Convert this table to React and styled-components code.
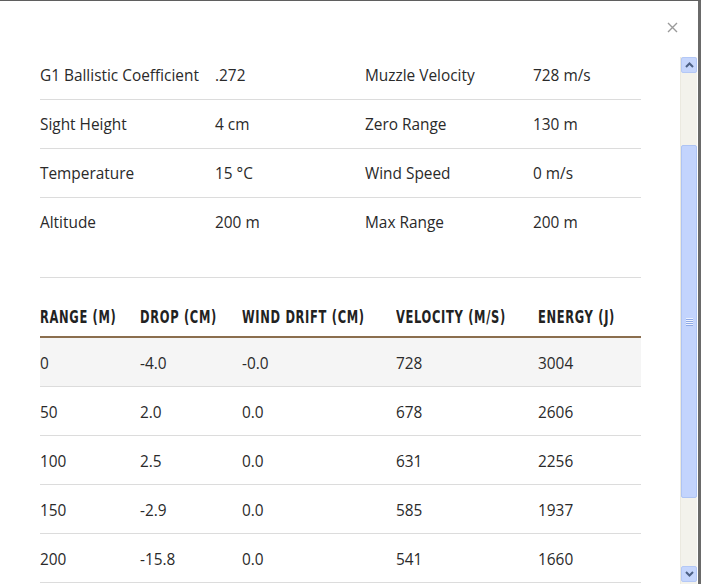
import React from "react";
import styled, { createGlobalStyle } from "styled-components";

const GlobalStyle = createGlobalStyle`
  html, body {
    margin: 0;
    padding: 0;
    background: #ffffff;
  }
  body {
    font-family: "Open Sans", "Lato", sans-serif;
  }
`;

/* 바깥 창 */
const Frame = styled.div`
  width: 701px;
  height: 584px;
  box-sizing: border-box;
  border-top: 1px solid #5f5f5f;
  border-right: 3px solid #6a6a6a;
  display: flex;
  flex-direction: column;
  background: #ffffff;
  overflow: hidden;
`;

/* 닫기 버튼 영역 */
const TopBar = styled.div`
  height: 56px;
  flex-shrink: 0;
  display: flex;
  justify-content: flex-end;
  align-items: center;
  padding-right: 18px;
`;

const CloseButton = styled.button`
  border: none;
  background: none;
  padding: 0;
  width: 16px;
  height: 16px;
  cursor: pointer;
  display: flex;
  align-items: center;
  justify-content: center;
  margin-top: -3px;
`;

const Body = styled.div`
  flex: 1;
  display: flex;
  min-height: 0;
`;

/* 스크롤 내용 */
const ScrollView = styled.div`
  flex: 1;
  overflow: hidden;
  padding: 0 39px 0 40px;
`;

const Inner = styled.div`
  margin-top: -6px;
`;

const InfoGrid = styled.div`
  display: grid;
  grid-template-columns: 175px 150px 168px 1fr;
  border-bottom: 1px solid #dcdcdc;
  padding-bottom: 31px;
`;

const InfoCell = styled.div`
  height: 47px;
  padding-top: 1px;
  display: flex;
  align-items: center;
  font-size: 15.4px;
  color: #2a2a2a;
  white-space: nowrap;
  border-bottom: ${(p) => (p.last ? "none" : "1px solid #dcdcdc")};
`;

const Table = styled.table`
  width: 100%;
  border-collapse: collapse;
  table-layout: fixed;
`;

const HeadCell = styled.th`
  text-align: left;
  padding: 28px 0 8px;
  line-height: 22px;
  width: ${(p) => p.w};
  border-bottom: 2px solid #8b6e4e;
  white-space: nowrap;
  overflow: visible;
`;

/* 좁은 헤더 글꼴 대용 */
const HeadText = styled.span`
  display: inline-block;
  font-family: "DejaVu Sans Condensed", "DejaVu Sans", sans-serif;
  font-weight: 700;
  font-size: 17px;
  letter-spacing: 0.9px;
  color: #222222;
  text-transform: uppercase;
  transform: scaleX(0.75);
  transform-origin: left center;
`;

const Row = styled.tr`
  background: ${(p) => (p.shade ? "#f5f5f5" : "transparent")};
  border-bottom: 1px solid #dcdcdc;
`;

const Cell = styled.td`
  height: 46px;
  padding: 2px 0 0;
  font-size: 15.4px;
  color: #2a2a2a;
`;

/* XP 스타일 스크롤바 */
const ScrollBar = styled.div`
  width: 16px;
  flex-shrink: 0;
  background: #f3f2ec;
  border-left: 1px solid #ebe9e0;
  display: flex;
  flex-direction: column;
  padding-bottom: 2px;
  margin-right: 1px;
`;

const ArrowButton = styled.div`
  height: 16px;
  box-sizing: border-box;
  background: #c6d6fc;
  border: 1px solid #b4c8f6;
  border-radius: 2px;
  display: flex;
  align-items: center;
  justify-content: center;
`;

const Track = styled.div`
  flex: 1;
  display: flex;
  flex-direction: column;
  padding: ${(p) => p.pad};
`;

const Thumb = styled.div`
  flex: 1;
  background: #c3d4fd;
  border: 1px solid #aec4f4;
  border-radius: 2px;
  display: flex;
  align-items: center;
  justify-content: center;
`;

const Grip = styled.div`
  display: flex;
  flex-direction: column;
  gap: 1px;

  span {
    display: block;
    width: 7px;
    height: 1px;
    background: #eef3ff;
    box-shadow: 0 1px 0 #8ea9e6;
  }
`;

const info = [
  ["G1 Ballistic Coefficient", ".272", "Muzzle Velocity", "728 m/s"],
  ["Sight Height", "4 cm", "Zero Range", "130 m"],
  ["Temperature", "15 °C", "Wind Speed", "0 m/s"],
  ["Altitude", "200 m", "Max Range", "200 m"],
];

const heads = [
  ["Range (m)", "100px"],
  ["Drop (cm)", "102px"],
  ["Wind Drift (cm)", "154px"],
  ["Velocity (m/s)", "142px"],
  ["Energy (J)", "auto"],
];

const rows = [
  ["0", "-4.0", "-0.0", "728", "3004"],
  ["50", "2.0", "0.0", "678", "2606"],
  ["100", "2.5", "0.0", "631", "2256"],
  ["150", "-2.9", "0.0", "585", "1937"],
  ["200", "-15.8", "0.0", "541", "1660"],
];

const Chevron = ({ up }) => (
  <svg width="9" height="6" viewBox="0 0 9 6">
    <path
      d={up ? "M1 5 L4.5 1.5 L8 5" : "M1 1 L4.5 4.5 L8 1"}
      fill="none"
      stroke="#4d6185"
      strokeWidth="2"
    />
  </svg>
);

const App = () => {
  return (
    <>
      <GlobalStyle />
      <Frame>
        <TopBar>
          <CloseButton aria-label="close">
            <svg width="11" height="11" viewBox="0 0 11 11">
              <path d="M1 1 L10 10 M10 1 L1 10" stroke="#9a9a9a" strokeWidth="1.4" />
            </svg>
          </CloseButton>
        </TopBar>
        <Body>
          <ScrollView>
            <Inner>
              <InfoGrid>
                {info.map((r, i) =>
                  r.map((t, j) => (
                    <InfoCell key={`${i}-${j}`} last={i === info.length - 1}>
                      {t}
                    </InfoCell>
                  ))
                )}
              </InfoGrid>
              <Table>
                <thead>
                  <tr>
                    {heads.map(([h, w]) => (
                      <HeadCell key={h} w={w}>
                        <HeadText>{h}</HeadText>
                      </HeadCell>
                    ))}
                  </tr>
                </thead>
                <tbody>
                  {rows.map((r, i) => (
                    <Row key={i} shade={i === 0}>
                      {r.map((c, j) => (
                        <Cell key={j}>{c}</Cell>
                      ))}
                    </Row>
                  ))}
                </tbody>
              </Table>
            </Inner>
          </ScrollView>
          <ScrollBar>
            <ArrowButton>
              <Chevron up />
            </ArrowButton>
            <Track pad="72px 0 68px">
              <Thumb>
                <Grip>
                  <span />
                  <span />
                  <span />
                  <span />
                </Grip>
              </Thumb>
            </Track>
            <ArrowButton>
              <Chevron />
            </ArrowButton>
          </ScrollBar>
        </Body>
      </Frame>
    </>
  );
};

export default App;
